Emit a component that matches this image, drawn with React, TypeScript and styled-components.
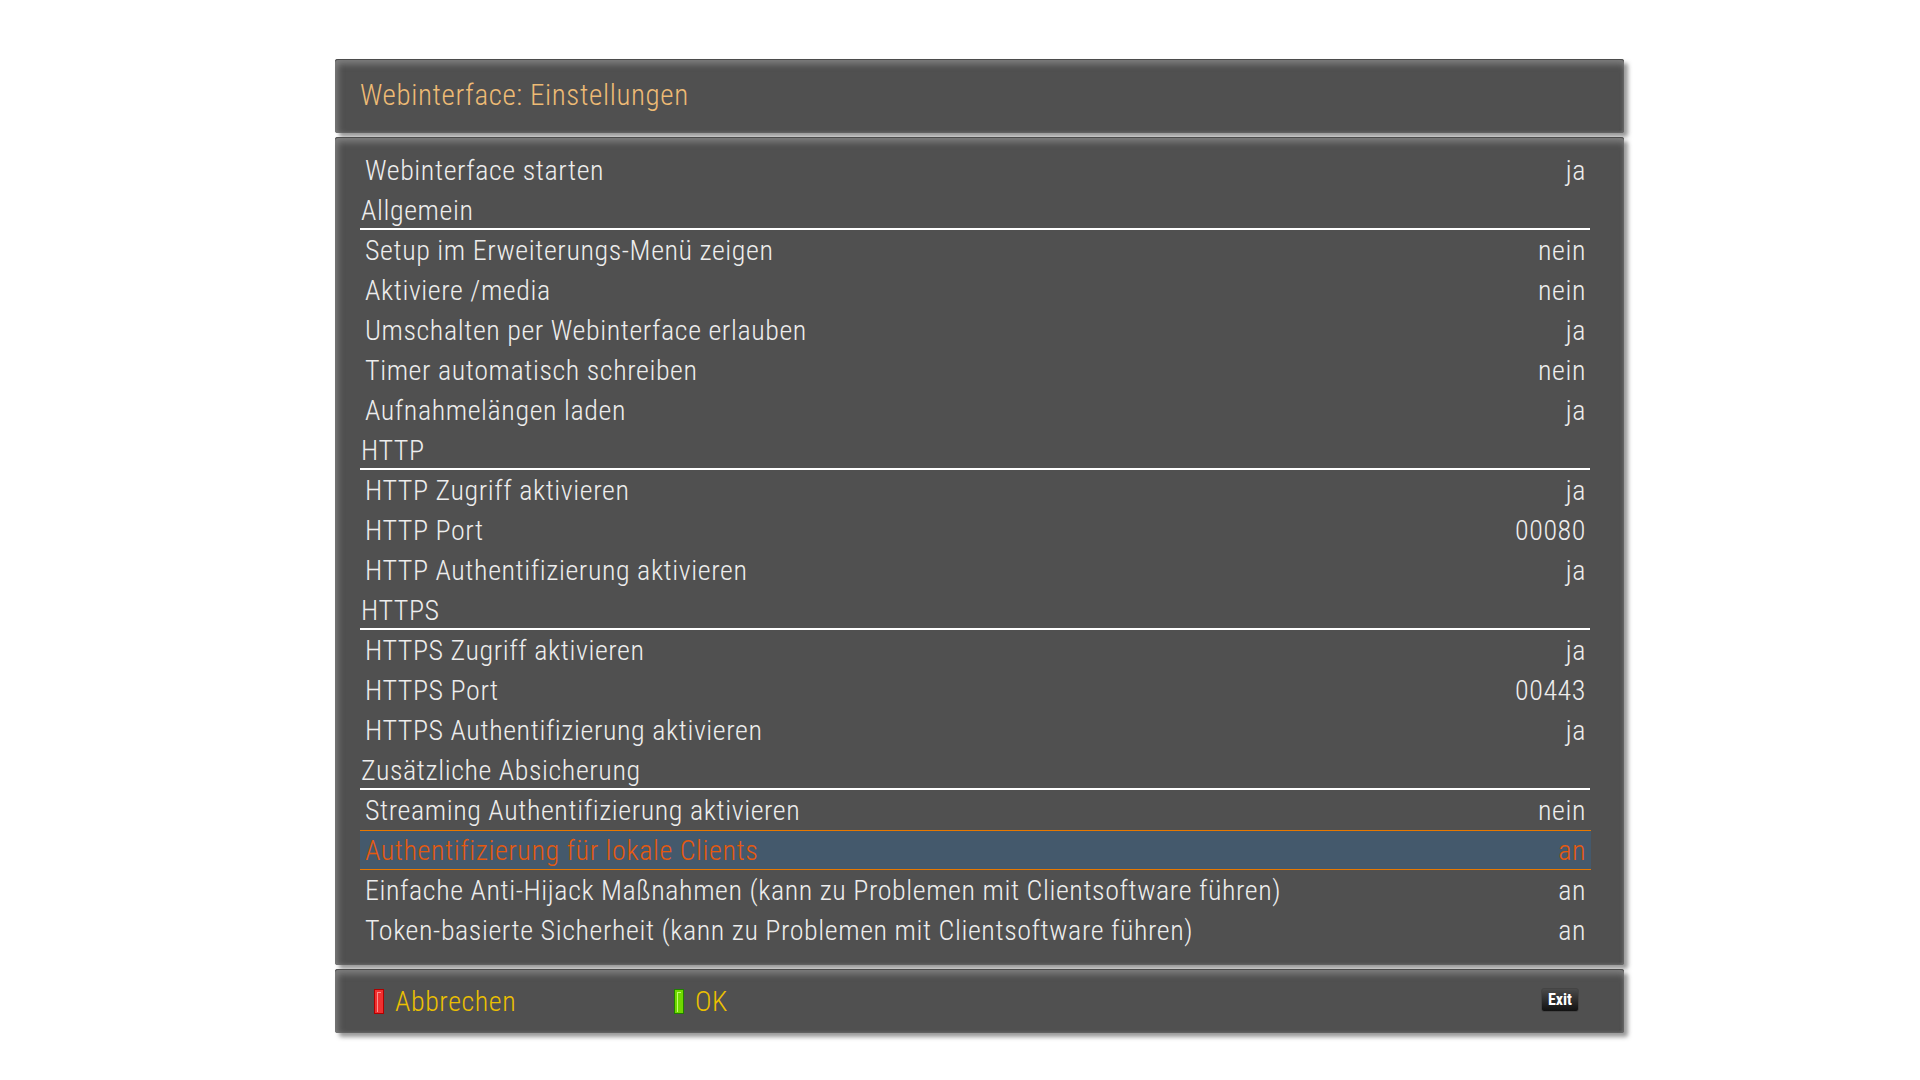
import React from "react";
import styled, { createGlobalStyle } from "styled-components";

const Global = createGlobalStyle`
  html, body { margin: 0; padding: 0; background: #fff; }
  body { font-family: Roboto, "Liberation Sans", sans-serif; }
`;

const Screen = styled.div`
  width: 1920px;
  height: 1080px;
  padding: 59px 0 0 335px;
  box-sizing: border-box;
  display: flex;
  flex-direction: column;
  gap: 4px;
  overflow: hidden;
`;

const Panel = styled.section<{ $h: number }>`
  width: 1289px;
  height: ${(p) => p.$h}px;
  flex: none;
  box-sizing: border-box;
  background: #505050;
  border-radius: 3px;
  box-shadow: 4px 4px 4px rgba(70, 70, 70, 0.55), inset 0 1px 0 #4c4c4c,
    inset 0 8px 6px -3px #7e7e7e, inset 7px 0 6px -4px #7a7a7a, inset -3px 0 3px -2px #686868,
    inset 0 -3px 3px -2px #686868;
`;

const Header = styled(Panel)`
  display: flex;
  align-items: center;
  padding: 0 0 3px 25px;
`;

const Text = styled.span`
  font-family: Roboto, sans-serif;
  font-stretch: 75%;
  font-weight: 350;
  font-size: 28px;
  letter-spacing: 0.58px;
  line-height: 40px;
  white-space: pre;
`;

const Title = styled(Text)`
  color: #eebb75;
  font-size: 29px;
  letter-spacing: 0.62px;
`;

const List = styled(Panel)`
  padding: 13px 33px 0 25px;
  display: flex;
  flex-direction: column;
`;

const Row = styled.div<{ $selected?: boolean }>`
  height: 40px;
  box-sizing: border-box;
  display: flex;
  justify-content: space-between;
  align-items: center;
  padding: 2px 5px 0;
  color: #ededed;
  ${(p) =>
    p.$selected &&
    `
    background: #44596c;
    border-top: 1px solid #e87800;
    border-bottom: 1px solid #e87800;
    color: #e5590f;
  `}
`;

const Section = styled.div`
  height: 40px;
  width: 1230px;
  box-sizing: border-box;
  display: flex;
  align-items: center;
  padding: 4px 1px 0;
  color: #ededed;
  border-bottom: 2px solid #fff;
`;

const Footer = styled(Panel)`
  display: flex;
  align-items: center;
  padding: 1px 45px 0 39px;
`;

const Key = styled.div`
  display: flex;
  align-items: center;
  gap: 11px;
  width: 300px;
  color: #ecc000;
`;

const Led = styled.i<{ $c: string; $b: string; $l: string }>`
  width: 10px;
  height: 25px;
  box-sizing: border-box;
  display: block;
  background: ${(p) => p.$c};
  border: 1px solid ${(p) => p.$b};
  box-shadow: inset 2px 2px 0 ${(p) => p.$c}, inset -2px -1px 0 ${(p) => p.$c},
    inset 3px 3px 0 ${(p) => p.$l};
`;

const ExitKey = styled.div`
  margin-left: auto;
  margin-bottom: 4px;
  width: 38px;
  height: 24px;
  border-radius: 3px;
  border: 1px solid #444;
  box-sizing: border-box;
  background: linear-gradient(#4a4a4a, #111);
  color: #fff;
  font-family: Roboto, sans-serif;
  font-stretch: 75%;
  font-weight: 700;
  font-size: 16px;
  display: flex;
  align-items: center;
  justify-content: center;
`;

type Item = { t: string; v?: string; section?: boolean; sel?: boolean };

const items: Item[] = [
  { t: "Webinterface starten", v: "ja" },
  { t: "Allgemein", section: true },
  { t: "Setup im Erweiterungs-Menü zeigen", v: "nein" },
  { t: "Aktiviere /media", v: "nein" },
  { t: "Umschalten per Webinterface erlauben", v: "ja" },
  { t: "Timer automatisch schreiben", v: "nein" },
  { t: "Aufnahmelängen laden", v: "ja" },
  { t: "HTTP", section: true },
  { t: "HTTP Zugriff aktivieren", v: "ja" },
  { t: "HTTP Port", v: "00080" },
  { t: "HTTP Authentifizierung aktivieren", v: "ja" },
  { t: "HTTPS", section: true },
  { t: "HTTPS Zugriff aktivieren", v: "ja" },
  { t: "HTTPS Port", v: "00443" },
  { t: "HTTPS Authentifizierung aktivieren", v: "ja" },
  { t: "Zusätzliche Absicherung", section: true },
  { t: "Streaming Authentifizierung aktivieren", v: "nein" },
  { t: "Authentifizierung für lokale Clients", v: "an", sel: true },
  { t: "Einfache Anti-Hijack Maßnahmen (kann zu Problemen mit Clientsoftware führen)", v: "an" },
  { t: "Token-basierte Sicherheit (kann zu Problemen mit Clientsoftware führen)", v: "an" },
];

export default function App() {
  return (
    <Screen>
      <Global />
      <Header $h={74}>
        <Title>Webinterface: Einstellungen</Title>
      </Header>
      <List $h={828}>
        {items.map((it) =>
          it.section ? (
            <Section key={it.t}>
              <Text>{it.t}</Text>
            </Section>
          ) : (
            <Row key={it.t} $selected={it.sel}>
              <Text>{it.t}</Text>
              <Text>{it.v}</Text>
            </Row>
          )
        )}
      </List>
      <Footer $h={64}>
        <Key>
          <Led $c="#f03030" $b="#b00000" $l="#ff9090" />
          <Text>Abbrechen</Text>
        </Key>
        <Key>
          <Led $c="#70d800" $b="#208000" $l="#c0ff70" />
          <Text>OK</Text>
        </Key>
        <ExitKey>Exit</ExitKey>
      </Footer>
    </Screen>
  );
}
